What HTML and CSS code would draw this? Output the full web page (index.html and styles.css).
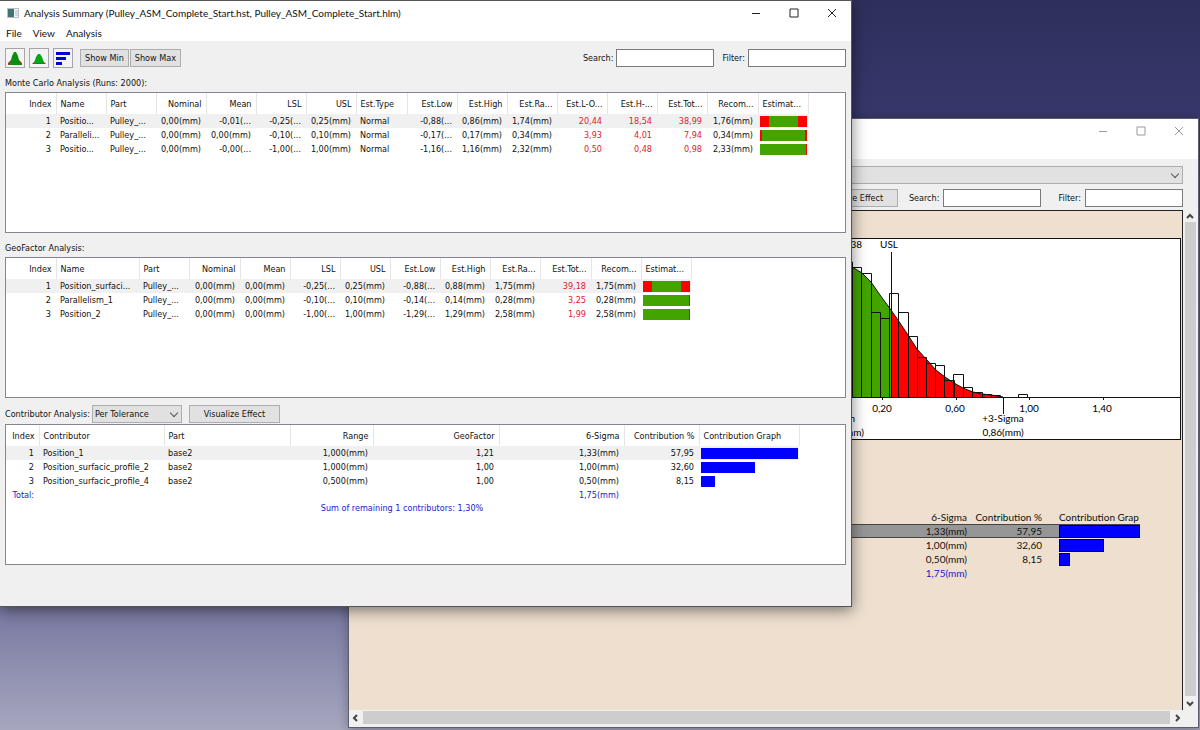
FILE: index.html
```html
<!DOCTYPE html>
<html lang="en">
<head>
    <meta charset="UTF-8">
    <meta name="viewport" content="width=device-width, initial-scale=1.0">
    <title>Analysis Summary</title>
    <link rel="stylesheet" href="styles.css">
</head>
<body>
    <div class="desktop">

        <!-- Details window (behind) -->
        <section class="window window-back">
            <header class="titlebar">
                <div class="window-controls">
                    <button type="button" aria-label="Minimize"><svg width="10" height="10"><path d="M1 5.5h8"/></svg></button>
                    <button type="button" aria-label="Maximize"><svg width="10" height="10"><path d="M1 1h8v8h-8z"/></svg></button>
                    <button type="button" aria-label="Close"><svg width="10" height="10"><path d="M1 1l8 8M9 1l-8 8"/></svg></button>
                </div>
            </header>
            <div class="menubar"></div>

            <div class="back-tools">
                <div class="select-box wide">
                    <select aria-label="Measurement"><option></option></select>
                </div>
                <div class="back-row">
                    <button type="button" class="btn btn-wide">Visualize Effect</button>
                    <label for="backSearch">Search:</label>
                    <input type="text" id="backSearch">
                    <label for="backFilter" class="back-filter">Filter:</label>
                    <input type="text" id="backFilter">
                </div>
            </div>

            <div class="scroll-area">
                <div class="report">
                    <div class="chart">
                        <svg width="380" height="200" viewBox="800 239 380 200">
                            <path class="ok" d="M800 290C820 262 835 259 852 267L862 273L871 282L880 295L891 310V397H800Z"/>
                            <path class="bad" d="M891 310L898 320L908 335L917 349L927 360L936 370L945 377L954 383L963 388L973 392L982 394L991 395L1003 397H891Z"/>
                            <path class="line" d="M843 397V262H852.5V397M852.5 267.5H861.5V397M861.5 273.5H871.5V397M871.5 312.5H880.5V397M880.5 318.5H889.5V397M889.5 293.5H898.5V397M889.5 293.5V397M898.5 312.5H908.5V397M908.5 336.5H917.5V397M917.5 357.5H926.5V397M926.5 363.5H935.5V397M935.5 365.5H944.5V397M944.5 380.5H954.5V397M953.5 397V374.5H963.5V397M963.5 387.5H972.5V397M972.5 392.5H982.5V397M982.5 394.5H991.5V397M991.5 395.5H1000.5V397M1018.5 397V394.5H1027.5V397"/>
                            <path class="line" d="M852 267L862 273L871 282L880 295L891 310L898 320L908 335L917 349L927 360L936 370L945 377L954 383L963 388L973 392L982 394L991 395L1003 397"/>
                            <path class="line" d="M800 397.5H1180M891.5 252V397M1003.5 397V414M882.5 397v3M956.5 397v3M1029.5 397v3M1103.5 397v3"/>
                            <g text-anchor="middle">
                                <text x="889" y="248">USL</text>
                                <text x="882" y="412">0,20</text>
                                <text x="955" y="412">0,60</text>
                                <text x="1029" y="412">1,00</text>
                                <text x="1102" y="412">1,40</text>
                                <text x="1003" y="422">+3-Sigma</text>
                                <text x="1003" y="436">0,86(mm)</text>
                            </g>
                            <g text-anchor="end">
                                <text x="862" y="248">38</text>
                                <text x="855" y="422">Mean</text>
                                <text x="864" y="436">-0,01(mm)</text>
                            </g>
                        </svg>
                    </div>

                    <table class="report-table">
                        <thead>
                            <tr><th>Contributor</th><th class="num sigma">6-Sigma</th><th class="num percent">Contribution %</th><th class="spacer"></th><th class="graph">Contribution Grap</th></tr>
                        </thead>
                        <tbody>
                            <tr class="current"><td>Position_1</td><td class="num">1,33(mm)</td><td class="num">57,95</td><td></td><td class="graph"><div class="bar" style="width: 100%"></div></td></tr>
                            <tr><td>Position_surfacic_profile_2</td><td class="num">1,00(mm)</td><td class="num">32,60</td><td></td><td class="graph"><div class="bar" style="width: 56%"></div></td></tr>
                            <tr><td>Position_surfacic_profile_4</td><td class="num">0,50(mm)</td><td class="num">8,15</td><td></td><td class="graph"><div class="bar" style="width: 14%"></div></td></tr>
                            <tr class="total"><td>Total:</td><td class="num">1,75(mm)</td><td></td><td></td><td></td></tr>
                        </tbody>
                    </table>
                </div>
                <div class="scrollbar vertical">
                    <svg width="8" height="12"><path d="M1 8l3-3 3 3"/></svg>
                    <div class="thumb"></div>
                    <svg width="8" height="14"><path d="M1 6l3 3 3-3"/></svg>
                </div>
            </div>
            <div class="scrollbar horizontal">
                <svg width="14" height="8"><path d="M8 1l-3 3 3 3"/></svg>
                <div class="thumb"></div>
                <svg width="14" height="8"><path d="M6 1l3 3-3 3"/></svg>
            </div>
        </section>

        <!-- Summary window (front) -->
        <section class="window window-front">
            <header class="titlebar">
                <svg class="app-icon" width="12" height="10">
                    <rect x="0.5" y="0.5" width="11" height="9" fill="#f4f7f8" stroke="#b9c0c4"/>
                    <rect x="1" y="1" width="6" height="8" fill="#3f7476"/>
                    <rect x="8" y="2" width="3" height="6" fill="#d3dadd"/>
                </svg>
                <h1>Analysis Summary (Pulley_ASM_Complete_Start.hst, Pulley_ASM_Complete_Start.hlm)</h1>
                <div class="window-controls">
                    <button type="button" aria-label="Minimize"><svg width="10" height="10"><path d="M1 5.5h8"/></svg></button>
                    <button type="button" aria-label="Maximize"><svg width="10" height="10"><path d="M1 1h8v8h-8z"/></svg></button>
                    <button type="button" aria-label="Close"><svg width="10" height="10"><path d="M1 1l8 8M9 1l-8 8"/></svg></button>
                </div>
            </header>
            <nav class="menubar">
                <a href="#">File</a>
                <a href="#">View</a>
                <a href="#">Analysis</a>
            </nav>

            <div class="client">
                <div class="toolbar">
                    <button type="button" class="icon-btn" aria-label="Monte Carlo">
                        <svg width="16" height="16"><path d="M1 15v-2l3-3h8l3 3v2z" fill="#c8281e"/><path d="M2 15L4 10L5 6L7 2h2l2 4l1 4l2 5z" fill="#0a8f14"/></svg>
                    </button>
                    <button type="button" class="icon-btn" aria-label="GeoFactor">
                        <svg width="16" height="16"><path d="M1 14l3-3h8l3 3z" fill="#c8281e"/><path d="M3 13L5 7L7 4h2l2 3l2 6z" fill="#0aa514"/></svg>
                    </button>
                    <button type="button" class="icon-btn" aria-label="Contributors">
                        <svg width="16" height="16"><path d="M1 2h14v3h-14zM1 7h10v3h-10zM1 12h6v3h-6z" fill="#0000d8"/></svg>
                    </button>
                    <div class="show-buttons">
                        <button type="button" class="btn">Show Min</button>
                        <button type="button" class="btn">Show Max</button>
                    </div>
                    <div class="finders">
                        <label for="search">Search:</label>
                        <input type="text" id="search">
                        <label for="filter">Filter:</label>
                        <input type="text" id="filter">
                    </div>
                </div>

                <h2>Monte Carlo Analysis (Runs: 2000):</h2>
                <div class="panel">
                    <table class="grid monte">
                        <colgroup><col><col span="6"><col class="w51"><col span="5"><col><col class="w51"><col></colgroup>
                        <thead>
                            <tr><th class="num">Index</th><th>Name</th><th>Part</th><th class="num">Nominal</th><th class="num">Mean</th><th class="num">LSL</th><th class="num">USL</th><th>Est.Type</th><th class="num">Est.Low</th><th class="num">Est.High</th><th class="num">Est.Ra...</th><th class="num">Est.L-O...</th><th class="num">Est.H-...</th><th class="num">Est.Tot...</th><th class="num">Recom...</th><th>Estimat...</th></tr>
                        </thead>
                        <tbody>
                            <tr class="current"><td class="num">1</td><td>Positio...</td><td>Pulley_...</td><td class="num">0,00(mm)</td><td class="num">-0,01(...</td><td class="num">-0,25(...</td><td class="num">0,25(mm)</td><td>Normal</td><td class="num">-0,88(...</td><td class="num">0,86(mm)</td><td class="num">1,74(mm)</td><td class="num out">20,44</td><td class="num out">18,54</td><td class="num out">38,99</td><td class="num">1,76(mm)</td><td class="graph"><div class="spread"><i style="width: 20%"></i><i style="width: 19%"></i></div></td></tr>
                            <tr><td class="num">2</td><td>Paralleli...</td><td>Pulley_...</td><td class="num">0,00(mm)</td><td class="num">0,00(mm)</td><td class="num">-0,10(...</td><td class="num">0,10(mm)</td><td>Normal</td><td class="num">-0,17(...</td><td class="num">0,17(mm)</td><td class="num">0,34(mm)</td><td class="num out">3,93</td><td class="num out">4,01</td><td class="num out">7,94</td><td class="num">0,34(mm)</td><td class="graph"><div class="spread"><i style="width: 4%"></i><i style="width: 4%"></i></div></td></tr>
                            <tr><td class="num">3</td><td>Positio...</td><td>Pulley_...</td><td class="num">0,00(mm)</td><td class="num">-0,00(...</td><td class="num">-1,00(...</td><td class="num">1,00(mm)</td><td>Normal</td><td class="num">-1,16(...</td><td class="num">1,16(mm)</td><td class="num">2,32(mm)</td><td class="num out">0,50</td><td class="num out">0,48</td><td class="num out">0,98</td><td class="num">2,33(mm)</td><td class="graph"><div class="spread"><i style="width: 0%"></i><i style="width: 2%"></i></div></td></tr>
                        </tbody>
                    </table>
                </div>

                <h2>GeoFactor Analysis:</h2>
                <div class="panel">
                    <table class="grid geo">
                        <colgroup><col><col class="w83"><col><col class="w51"><col span="6"><col class="w51"><col span="2"></colgroup>
                        <thead>
                            <tr><th class="num">Index</th><th>Name</th><th>Part</th><th class="num">Nominal</th><th class="num">Mean</th><th class="num">LSL</th><th class="num">USL</th><th class="num">Est.Low</th><th class="num">Est.High</th><th class="num">Est.Ra...</th><th class="num">Est.Tot...</th><th class="num">Recom...</th><th>Estimat...</th></tr>
                        </thead>
                        <tbody>
                            <tr class="current"><td class="num">1</td><td>Position_surfaci...</td><td>Pulley_...</td><td class="num">0,00(mm)</td><td class="num">0,00(mm)</td><td class="num">-0,25(...</td><td class="num">0,25(mm)</td><td class="num">-0,88(...</td><td class="num">0,88(mm)</td><td class="num">1,75(mm)</td><td class="num out">39,18</td><td class="num">1,75(mm)</td><td class="graph"><div class="spread"><i style="width: 19%"></i><i style="width: 19%"></i></div></td></tr>
                            <tr><td class="num">2</td><td>Parallelism_1</td><td>Pulley_...</td><td class="num">0,00(mm)</td><td class="num">0,00(mm)</td><td class="num">-0,10(...</td><td class="num">0,10(mm)</td><td class="num">-0,14(...</td><td class="num">0,14(mm)</td><td class="num">0,28(mm)</td><td class="num out">3,25</td><td class="num">0,28(mm)</td><td class="graph"><div class="spread"><i style="width: 0%"></i><i style="width: 2%"></i></div></td></tr>
                            <tr><td class="num">3</td><td>Position_2</td><td>Pulley_...</td><td class="num">0,00(mm)</td><td class="num">0,00(mm)</td><td class="num">-1,00(...</td><td class="num">1,00(mm)</td><td class="num">-1,29(...</td><td class="num">1,29(mm)</td><td class="num">2,58(mm)</td><td class="num out">1,99</td><td class="num">2,58(mm)</td><td class="graph"><div class="spread"><i style="width: 0%"></i><i style="width: 2%"></i></div></td></tr>
                        </tbody>
                    </table>
                </div>

                <div class="contrib-bar">
                    <label for="mode">Contributor Analysis:</label>
                    <div class="select-box">
                        <select id="mode"><option>Per Tolerance</option></select>
                    </div>
                    <button type="button" class="btn btn-wide">Visualize Effect</button>
                </div>
                <div class="panel">
                    <table class="grid contrib">
                        <colgroup><col class="w33"><col class="w125"><col class="w126"><col class="w83"><col class="w126"><col class="w125"><col class="w75"><col class="w100"></colgroup>
                        <thead>
                            <tr><th class="num">Index</th><th>Contributor</th><th>Part</th><th class="num">Range</th><th class="num">GeoFactor</th><th class="num">6-Sigma</th><th class="num">Contribution %</th><th>Contribution Graph</th></tr>
                        </thead>
                        <tbody>
                            <tr class="current"><td class="num">1</td><td>Position_1</td><td>base2</td><td class="num">1,000(mm)</td><td class="num">1,21</td><td class="num">1,33(mm)</td><td class="num">57,95</td><td class="graph"><div class="bar" style="width: 100%"></div></td></tr>
                            <tr><td class="num">2</td><td>Position_surfacic_profile_2</td><td>base2</td><td class="num">1,000(mm)</td><td class="num">1,00</td><td class="num">1,00(mm)</td><td class="num">32,60</td><td class="graph"><div class="bar" style="width: 56%"></div></td></tr>
                            <tr><td class="num">3</td><td>Position_surfacic_profile_4</td><td>base2</td><td class="num">0,500(mm)</td><td class="num">1,00</td><td class="num">0,50(mm)</td><td class="num">8,15</td><td class="graph"><div class="bar" style="width: 14%"></div></td></tr>
                            <tr class="total"><td class="num">Total:</td><td></td><td></td><td></td><td></td><td class="num">1,75(mm)</td><td></td><td></td></tr>
                            <tr class="total rest"><td colspan="8">Sum of remaining 1 contributors: 1,30%</td></tr>
                        </tbody>
                    </table>
                </div>
            </div>
        </section>
    </div>
</body>
</html>
```

FILE: styles.css
```css
* {
    margin: 0;
    padding: 0;
    box-sizing: border-box;
}

body {
    font-family: "DejaVu Sans Condensed", "DejaVu Sans", sans-serif;
    font-size: 9px;
    line-height: 14px;
    color: #111;
}

.desktop {
    position: relative;
    height: 100vh;
    overflow: hidden;
    background: linear-gradient(#2f2f5c, #37376b 16%, #7a7aa2 84%, #a6a6bf);
}

/* windows */
.window {
    position: absolute;
    display: flex;
    flex-direction: column;
    background: #f0f0f0;
}

.window-front {
    top: 0;
    left: 0;
    width: 71%;
    border: 1px solid #55555c;
    border-left: none;
    box-shadow: 0 3px 14px rgba(0, 0, 0, 0.5);
}

.window-back {
    top: 118px;
    right: 1px;
    bottom: 2px;
    left: 29%;
    border: 1px solid #5c5c70;
    box-shadow: 0 2px 10px rgba(0, 0, 0, 0.3);
}

.titlebar {
    display: flex;
    align-items: center;
    height: 24px;
    padding-left: 7px;
    background: #fff;
}

.titlebar h1 {
    margin-left: 5px;
    font: 10px/14px Lato, "Open Sans", sans-serif;
}

.window-controls {
    display: flex;
    margin-left: auto;
}

.window-controls button {
    display: flex;
    align-items: center;
    justify-content: center;
    width: 38px;
    height: 22px;
    border: none;
    background: none;
}

.window-controls svg {
    fill: none;
    stroke: #222;
}

.window-back .window-controls svg {
    stroke: #999;
}

.menubar {
    display: flex;
    gap: 11px;
    height: 16px;
    padding-left: 6px;
    background: #fff;
    font: 10px/16px Lato, "Open Sans", sans-serif;
}

.menubar a {
    color: inherit;
    text-decoration: none;
}

/* controls */
button,
input,
select {
    font: inherit;
    color: inherit;
}

input {
    width: 98px;
    height: 18px;
    padding: 0 3px;
    border: 1px solid #7a7a7a;
    background: #fff;
}

.btn {
    height: 18px;
    padding: 0 4px;
    border: 1px solid #adadad;
    background: #e1e1e1;
}

.btn-wide {
    width: 91px;
}

.icon-btn {
    display: flex;
    align-items: center;
    justify-content: center;
    width: 20px;
    height: 20px;
    border: 1px solid #a6a6a6;
    background: #f4f4f4;
}

.select-box {
    position: relative;
    width: 90px;
}

.select-box select {
    display: block;
    width: 100%;
    height: 18px;
    padding: 0 2px;
    border: 1px solid #adadad;
    border-radius: 0;
    background: #e1e1e1;
    appearance: none;
}

.select-box::after {
    content: "";
    position: absolute;
    top: 5px;
    right: 5px;
    width: 5px;
    height: 5px;
    border: solid #555;
    border-width: 0 1px 1px 0;
    transform: rotate(45deg);
    pointer-events: none;
}

.select-box.wide {
    width: 100%;
}

/* summary window */
.client {
    padding: 7px 5px 41px;
}

.toolbar {
    display: flex;
    align-items: center;
    gap: 4px;
    margin-bottom: 8px;
}

.show-buttons {
    display: flex;
    gap: 1px;
    margin-left: 3px;
}

.finders {
    display: flex;
    align-items: center;
    gap: 3px;
    margin-left: auto;
}

.finders input + label {
    margin-left: 5px;
}

h2 {
    margin-bottom: 2px;
    font-size: 9px;
    font-weight: normal;
}

.panel {
    min-height: 141px;
    margin-bottom: 8px;
    border: 1px solid #82878f;
    background: #fff;
    overflow: hidden;
}

.contrib-bar {
    display: flex;
    align-items: center;
    gap: 2px;
    margin: -1px 0 1px;
}

.contrib-bar .btn {
    margin-left: 5px;
}

.contrib-bar + .panel {
    margin-bottom: 0;
}

/* tables */
table {
    border-collapse: collapse;
    table-layout: fixed;
}

th {
    font-weight: normal;
    text-align: left;
}

th,
td {
    overflow: hidden;
    white-space: nowrap;
}

.num {
    text-align: right;
}

.grid th {
    height: 21px;
    padding: 0 4px;
    border-right: 1px solid #e5e5e5;
}

.grid td {
    height: 14px;
    padding: 0 5px 0 4px;
}

.grid .current {
    background: #f0f0f0;
}

.monte {
    width: 802px;
}

.geo {
    width: 685px;
}

.contrib {
    width: 793px;
}

col {
    width: 50px;
}

.w33 {
    width: 33px;
}

.w51 {
    width: 51px;
}

.w75 {
    width: 75px;
}

.w83 {
    width: 83px;
}

.w100 {
    width: 100px;
}

.w125 {
    width: 125px;
}

.w126 {
    width: 126px;
}

.out {
    color: #e0202c;
}

.total {
    color: #1c1cc8;
}

.grid .rest td {
    height: 12px;
    line-height: 12px;
    text-align: center;
}

.grid .graph {
    padding: 0 1px 0 2px;
}

.spread {
    display: flex;
    justify-content: space-between;
    height: 11px;
    background: #43a400;
}

.spread i {
    background: #f00;
}

.bar {
    height: 11px;
    background: #00f;
}

/* details window */
.back-tools {
    padding: 7px 15px 3px 5px;
}

.back-row {
    display: flex;
    align-items: center;
    justify-content: flex-end;
    margin-top: 5px;
}

.back-row label {
    margin: 0 4px 0 11px;
}

.back-row .back-filter {
    margin-left: 17px;
}

.scroll-area {
    display: flex;
    flex: 1;
    min-height: 0;
}

.report {
    flex: 1;
    min-width: 0;
    padding-top: 27px;
    border: solid #222;
    border-width: 1px 1px 0 0;
    background: #eedfcf;
    font: 10px/14px Lato, "Open Sans", sans-serif;
}

.chart {
    display: flex;
    justify-content: flex-end;
    margin-right: 1px;
    border: 1px solid #111;
    background: #fff;
}

.chart .ok {
    fill: #43a400;
}

.chart .bad {
    fill: #f00;
}

.chart .line {
    fill: none;
    stroke: #111;
}

.report-table {
    width: calc(100% - 42px);
    margin-top: 70px;
}

.report-table .sigma,
.report-table .percent {
    width: 75px;
}

.report-table .spacer {
    width: 17px;
}

.report-table th.graph {
    width: 81px;
}

.report-table .current {
    background: #969696;
    box-shadow: inset 0 1px #444, inset 0 -1px #444;
}

.report-table .bar {
    height: 13px;
    border: 1px solid #00003c;
}

.scrollbar {
    display: flex;
    align-items: center;
    justify-content: space-between;
}

.scrollbar svg {
    flex: none;
    fill: none;
    stroke: #444;
    stroke-width: 2;
}

.scrollbar .thumb {
    flex: 1;
    background: #cdcdcd;
}

.scrollbar.vertical {
    flex-direction: column;
    width: 15px;
    padding-right: 1px;
}

.vertical .thumb {
    width: 11px;
}

.scrollbar.horizontal {
    height: 17px;
    padding: 0 14px 2px 0;
}

.horizontal .thumb {
    height: 13px;
}
```
